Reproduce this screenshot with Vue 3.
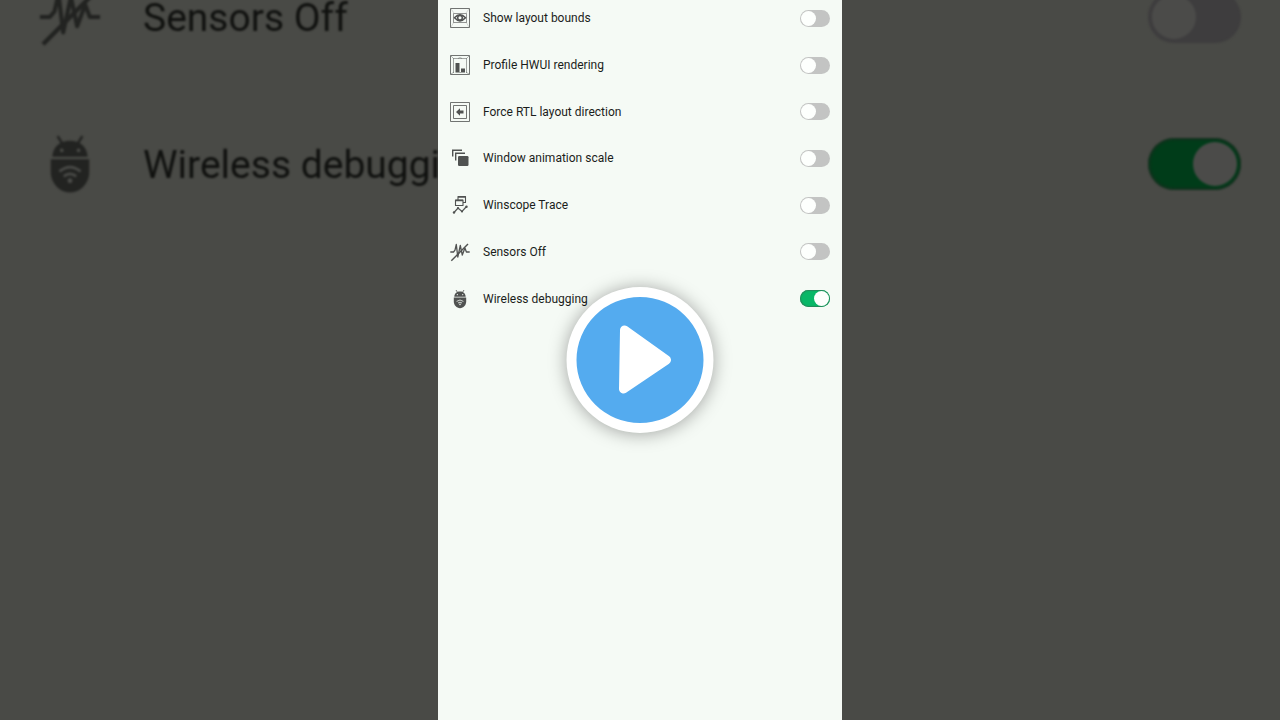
<script setup>
import { ref } from 'vue'

const tiles = ref([
  { id: 'bounds', label: 'Show layout bounds', on: false },
  { id: 'profile', label: 'Profile HWUI rendering', on: false },
  { id: 'rtl', label: 'Force RTL layout direction', on: false },
  { id: 'animation', label: 'Window animation scale', on: false },
  { id: 'winscope', label: 'Winscope Trace', on: false },
  { id: 'sensors', label: 'Sensors Off', on: false },
  { id: 'wireless', label: 'Wireless debugging', on: true },
])
</script>

<template>
  <main class="stage">
    <svg class="defs" aria-hidden="true">
      <symbol id="bounds" viewBox="0 0 20 20">
        <path d="M.5.5h19v19H.5z" fill="none" stroke="currentColor" opacity=".8" />
        <path d="M3.500 5.500h13v9h-13z" fill="none" stroke="currentColor" opacity=".6" />
        <path d="M1 1l3 4M19 1l-3 4M1 19l3-5M19 19l-3-5" stroke="currentColor" stroke-width=".5" opacity=".4" />
        <path d="M4.500 9.800Q10 3.500 15.500 9.800Q10 16 4.500 9.800z" fill="none" stroke="currentColor" stroke-width="1.500" />
        <circle cx="10" cy="9.800" r="2.300" fill="none" stroke="currentColor" stroke-width="1.500" />
      </symbol>
      <symbol id="profile" viewBox="0 0 20 20">
        <path d="M.5.5h19v19H.5z" fill="none" stroke="currentColor" opacity=".8" />
        <path d="M3.500 18V3.500h13V18" fill="none" stroke="currentColor" opacity=".5" />
        <path d="M1 1l3 3M19 1l-3 3M1 19l3-2M19 19l-3-2M8 3.500l2-1 2 1" fill="none" stroke="currentColor" stroke-width=".7" opacity=".6" />
        <path d="M5.500 8h4v9h-4zM11 13.500h4V17h-4z" fill="currentColor" />
        <path d="M5.500 17.500h9.500" stroke="currentColor" opacity=".5" />
      </symbol>
      <symbol id="rtl" viewBox="0 0 20 20">
        <path d="M.5.5h19v19H.5zM3.500 3.500h13v13h-13z" fill="none" stroke="currentColor" opacity=".8" />
        <path d="M6 10l4-3.800v2.300h3.500v3H10v2.300z" fill="currentColor" />
      </symbol>
      <symbol id="animation" viewBox="0 0 20 20">
        <path d="M2.700 8.500V2.300H12M5.700 12.500V5.300H15" fill="none" stroke="currentColor" stroke-width="1.400" />
        <rect x="8" y="8" width="10.500" height="10" rx="1.200" fill="currentColor" />
      </symbol>
      <symbol id="winscope" viewBox="0 0 20 20">
        <path d="M8 5V1.500h7.500v6H13M5.500 5h7.500v5.500H5.500z" fill="none" stroke="currentColor" stroke-width="1.100" stroke-linejoin="round" />
        <path d="M8 2h7.500M5.500 5.500H13" stroke="currentColor" stroke-width="1.500" />
        <path d="M4 17.500l4-4.500 4 3.500 4.500-5" fill="none" stroke="currentColor" stroke-width="1.200" />
        <g fill="currentColor">
          <circle cx="4" cy="17.500" r="1.200" /><circle cx="8" cy="13.200" r="1.100" />
          <circle cx="12" cy="16.500" r="1.100" /><circle cx="16.500" cy="11.700" r="1.200" />
        </g>
      </symbol>
      <symbol id="sensors" viewBox="0 0 20 20">
        <path d="M.3 10h3.200L5 8.200 6.300 2.500 7.800 15 10.300 3.500l2 9.500 2.600-7 1.500 4h3.300" fill="none" stroke="currentColor" stroke-width="1.300" stroke-linejoin="round" />
        <path d="M1.300 18.800L18 2" stroke="currentColor" stroke-width="1.400" />
      </symbol>
      <symbol id="wireless" viewBox="0 0 20 20">
        <path d="M6 1l2 3.200M14 1l-2 3.200" stroke="currentColor" stroke-width=".8" />
        <path fill-rule="evenodd" fill="currentColor" d="M4.300 7.700C4.500 4.200 7 2.500 10 2.500s5.500 1.700 5.700 5.200zM7.300 5a.6.6 0 1 0 .1 1.200A.6.6 0 0 0 7.300 5zm5.400 0a.6.6 0 1 0 .1 1.200.6.6 0 0 0-.1-1.200z" />
        <path d="M3.800 8.500h12.400v4.100c0 3.500-2.700 6.600-6.200 6.600s-6.200-3.100-6.200-6.600z" fill="currentColor" />
        <g class="wave" fill="none" stroke-width=".9">
          <path d="M6.600 12.400q3.400-2.800 6.800 0M8 14q2-1.600 4 0" />
        </g>
        <circle class="dot" cx="10" cy="15.400" r=".8" />
      </symbol>
    </svg>

    <div class="backdrop" aria-hidden="true">
      <div v-for="tile in tiles.slice(5)" :key="tile.id" class="big-row">
        <svg class="big-icon"><use :href="'#' + tile.id" /></svg>
        <span class="big-label">{{ tile.label }}</span>
        <span class="big-switch" :class="{ on: tile.on }"></span>
      </div>
    </div>

    <section class="phone" aria-label="Quick settings developer tiles">
      <ul class="list">
        <li v-for="tile in tiles" :key="tile.id">
          <label class="row" :for="'tile-' + tile.id">
            <svg class="icon" aria-hidden="true"><use :href="'#' + tile.id" /></svg>
            <span class="label">{{ tile.label }}</span>
            <input :id="'tile-' + tile.id" v-model="tile.on" class="switch" type="checkbox" role="switch" />
          </label>
        </li>
      </ul>
    </section>

    <button class="play" type="button" aria-label="Play">
      <svg class="triangle" viewBox="0 0 54 70" aria-hidden="true">
        <path d="M6 5L48 35 5 64z" fill="#fff" stroke="#fff" stroke-width="9" stroke-linejoin="round" />
      </svg>
    </button>
  </main>
</template>

<style>
body {
  margin: 0;
  background: #494a46;
}
</style>

<style scoped>
.stage {
  position: relative;
  display: flex;
  justify-content: center;
  min-height: 100vh;
  overflow: hidden;
  background: #494a46;
  font-family: Roboto, "Noto Sans", sans-serif;
}

.defs {
  position: absolute;
  width: 0;
  height: 0;
}

.backdrop {
  position: absolute;
  inset: -57px 0 0;
  color: #222321;
  --knockout: #4a4b48;
}

.big-row {
  display: flex;
  align-items: center;
  height: 147px;
  padding: 0 39px;
  filter: blur(1px);
}

.big-icon {
  flex: none;
  width: 62px;
  height: 62px;
}

/* The label ends where the centred phone panel begins. */
.big-label {
  flex: none;
  width: calc(50vw - 343px);
  margin: 0 auto 0 42px;
  padding-top: 2px;
  overflow: hidden;
  color: #10110f;
  font-size: 39px;
  line-height: 48px;
  white-space: nowrap;
}

.big-switch {
  box-sizing: border-box;
  display: flex;
  width: 93px;
  height: 52px;
  padding: 4px;
  border-radius: 26px;
  background: #3e3d3e;
}

.big-switch::before {
  content: "";
  width: 44px;
  height: 44px;
  border-radius: 50%;
  background: #4b4b49;
}

.big-switch.on {
  justify-content: flex-end;
  background: #003c19;
  box-shadow: inset 0 0 3px 1px #202a23;
}

.phone {
  position: relative;
  width: 100%;
  max-width: 404px;
  background: #f5faf5;
  color: #505251;
  --knockout: #dfe3df;
}

.list {
  display: grid;
  grid-template-rows: repeat(7, 1fr);
  height: 327px;
  margin: -5px 0 0;
  padding: 0;
  list-style: none;
}

.row {
  display: flex;
  align-items: center;
  height: 100%;
  padding: 0 12px;
}

.icon {
  flex: none;
  width: 20px;
  height: 20px;
}

.wave {
  stroke: var(--knockout);
}

.dot {
  fill: var(--knockout);
}

.label {
  flex: 1;
  margin-left: 13px;
  color: #1b1d1b;
  font-size: 12px;
  line-height: 16px;
}

.switch {
  appearance: none;
  box-sizing: border-box;
  display: flex;
  width: 30px;
  height: 17px;
  margin: 0;
  padding: 1px;
  border-radius: 9px;
  background: #c3c4c3;
}

.switch::before {
  content: "";
  width: 15px;
  height: 15px;
  border-radius: 50%;
  background: #fdfffd;
}

.switch:checked {
  justify-content: flex-end;
  background: #08b767;
  box-shadow: inset 0 0 1px 1px #26885a;
}

.play {
  position: absolute;
  top: 50%;
  left: 50%;
  display: flex;
  align-items: center;
  justify-content: center;
  box-sizing: border-box;
  width: 147px;
  height: 146px;
  padding: 0 0 0 11px;
  border: 10px solid #fff;
  border-radius: 50%;
  background: #54abef;
  box-shadow: 0 1px 18px rgba(0, 0, 0, 0.35);
  transform: translate(-50%, -50%);
  cursor: pointer;
}

.triangle {
  width: 54px;
  height: 70px;
}
</style>
